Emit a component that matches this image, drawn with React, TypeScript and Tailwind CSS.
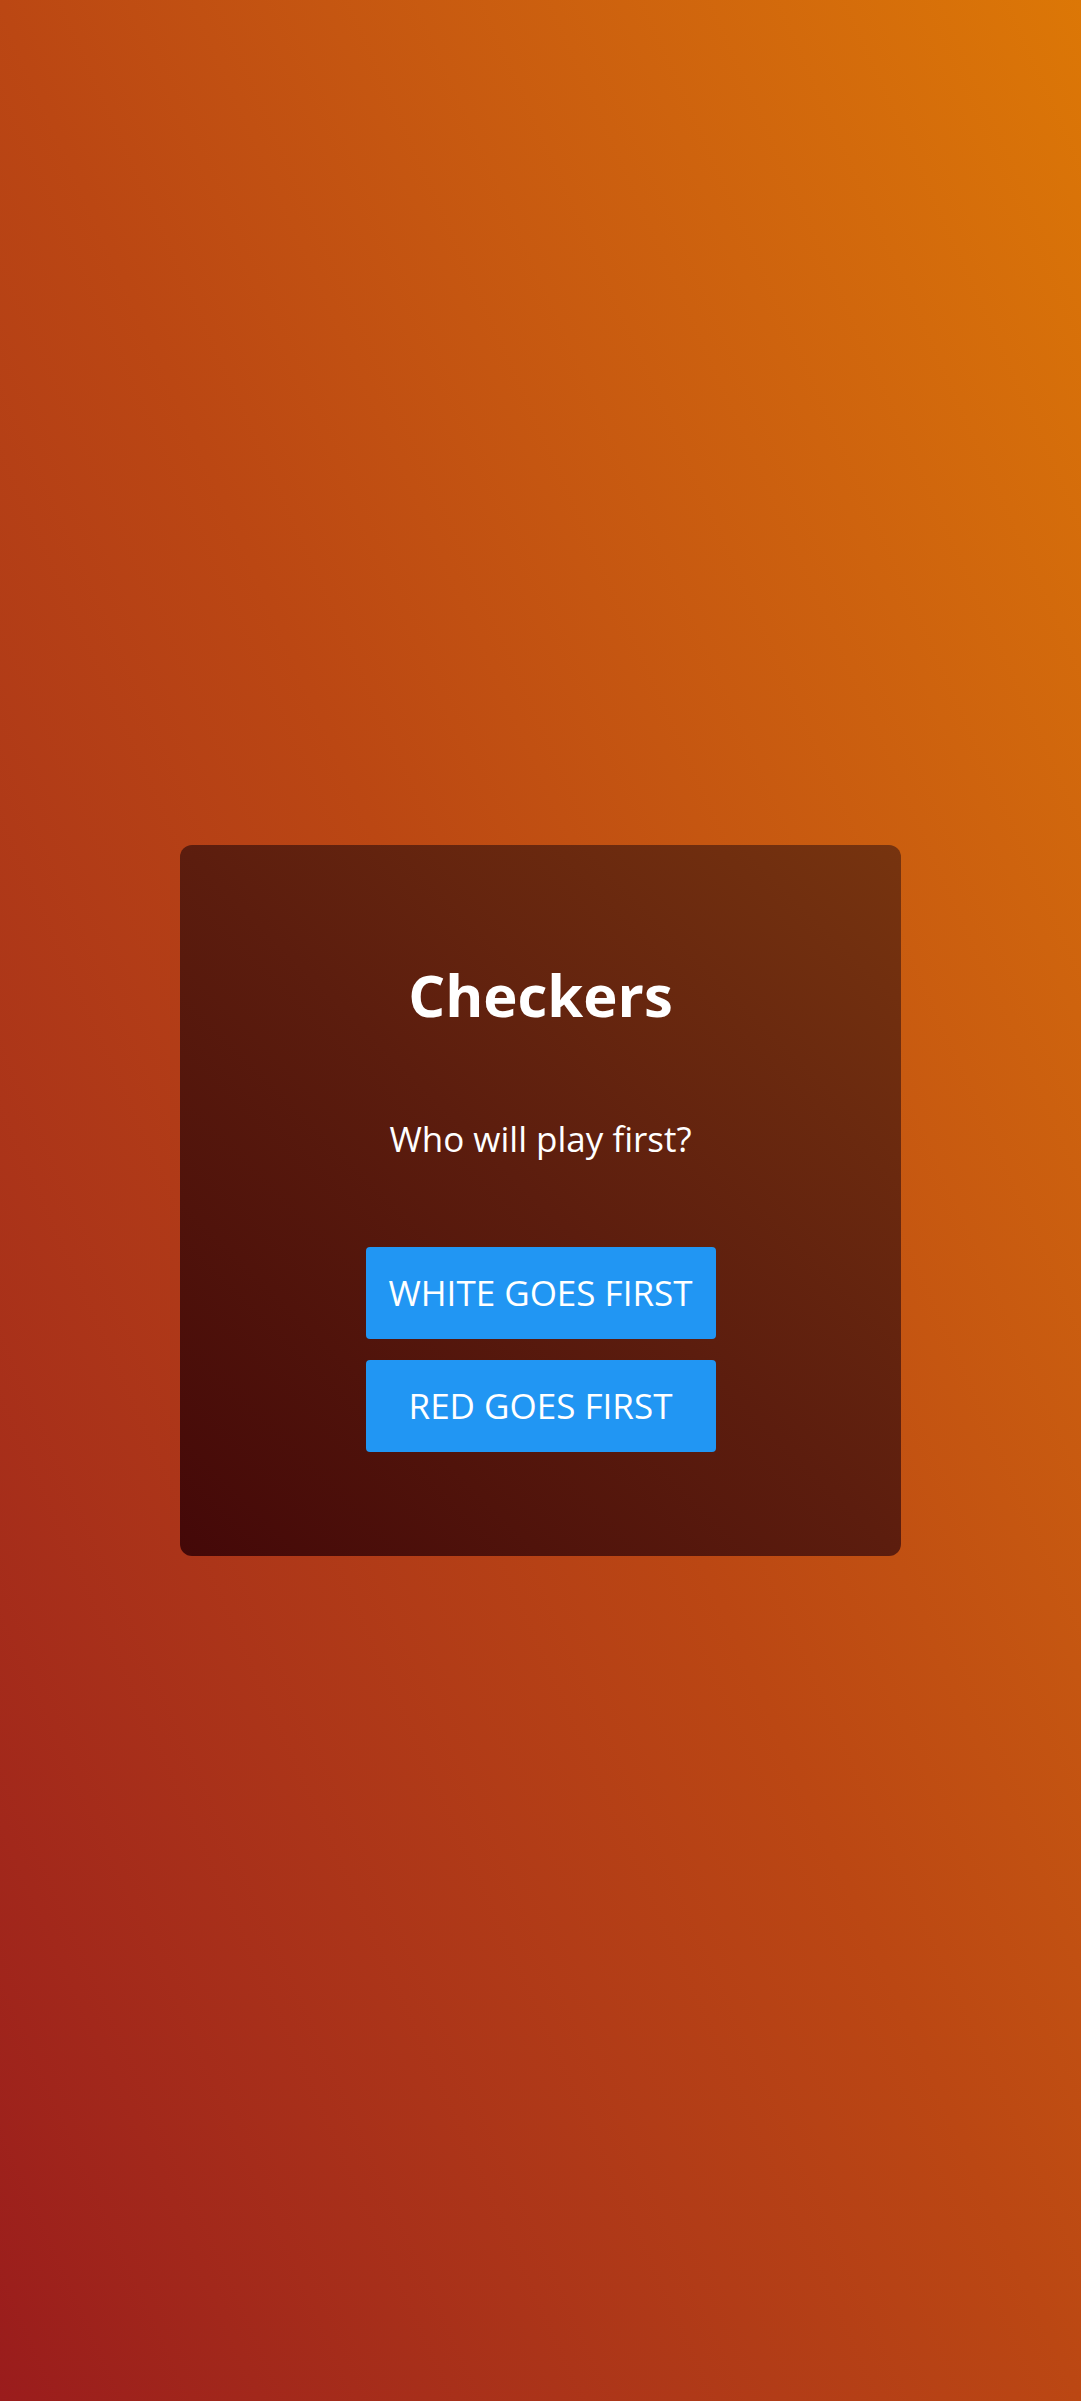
const CHOICES = ['WHITE GOES FIRST', 'RED GOES FIRST']

export default function App() {
  return (
    <div
      className="min-h-screen w-full flex items-center justify-center bg-gradient-to-tr from-[#9a1c1c] via-[#bb4713] to-[#dc7706]"
      style={{ fontFamily: '"Open Sans", "Noto Sans", sans-serif' }}
    >
      {/* menu card */}
      <div className="w-[721px] h-[711px] rounded-[12px] bg-gradient-to-tr from-[#440808] via-[#5c1d0e] to-[#77340f] flex flex-col items-center pt-[110px]">
        <h1 className="text-[58px] leading-[80px] font-bold text-white">Checkers</h1>
        <p className="mt-[80px] text-[35px] leading-[48px] text-white">Who will play first?</p>

        <div className="mt-[84px] flex flex-col gap-[21px]">
          {CHOICES.map((label) => (
            <button
              key={label}
              className="w-[350px] h-[92px] rounded-[4px] bg-[#2196f3] text-white text-[35px] flex items-center justify-center"
            >
              {label}
            </button>
          ))}
        </div>
      </div>
    </div>
  )
}
